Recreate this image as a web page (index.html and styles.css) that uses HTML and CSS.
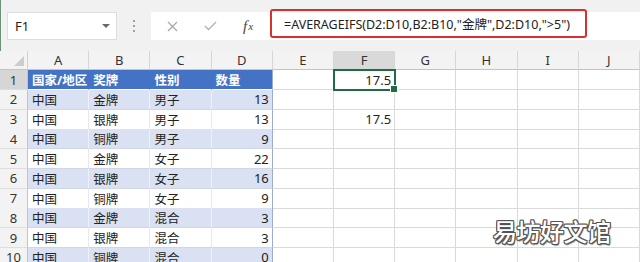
FILE: index.html
```html
<!DOCTYPE html>
<html lang="zh-CN">
<head>
  <meta charset="UTF-8">
  <title>AVERAGEIFS</title>
  <link rel="stylesheet" href="styles.css">
</head>
<body>
  <div class="toolbar">
    <div class="name-box"><span>F1</span><span class="caret"></span></div>
    <div class="grip"><i></i><i></i><i></i></div>
    <div class="formula-bar">
      <div class="fx-buttons">
        <span class="fx-btn">
          <svg width="11" height="11" viewBox="0 0 11 11"><path d="M1 1L10 10M10 1L1 10" stroke="#a9a9a9" stroke-width="1.3" fill="none"/></svg>
        </span>
        <span class="fx-btn">
          <svg width="13" height="10" viewBox="0 0 13 10"><path d="M1 5L4.5 8.5L12 1" stroke="#b3b3b3" stroke-width="1.4" fill="none"/></svg>
        </span>
        <span class="fx-btn fx-label"><i>f</i><sub>x</sub></span>
      </div>
      <div class="formula">=AVERAGEIFS(D2:D10,B2:B10,"金牌",D2:D10,"&gt;5")</div>
    </div>
  </div>

  <div class="sheet">
    <div class="row head">
      <div class="corner"><span></span></div>
      <div class="col">A</div><div class="col">B</div><div class="col">C</div><div class="col">D</div><div class="col">E</div>
      <div class="col active">F</div><div class="col">G</div><div class="col">H</div><div class="col">I</div><div class="col">J</div>
    </div>
    <div class="row">
      <div class="rh active">1</div>
      <div class="c th">国家/地区</div><div class="c th">奖牌</div><div class="c th">性别</div><div class="c th last">数量</div>
      <div class="c"></div><div class="c num selected">17.5</div><div class="c"></div><div class="c"></div><div class="c"></div><div class="c"></div>
    </div>
    <div class="row">
      <div class="rh">2</div>
      <div class="c t band">中国</div><div class="c t band">金牌</div><div class="c t band">男子</div><div class="c t band num last">13</div>
      <div class="c"></div><div class="c"></div><div class="c"></div><div class="c"></div><div class="c"></div><div class="c"></div>
    </div>
    <div class="row">
      <div class="rh">3</div>
      <div class="c t">中国</div><div class="c t">银牌</div><div class="c t">男子</div><div class="c t num last">13</div>
      <div class="c"></div><div class="c num">17.5</div><div class="c"></div><div class="c"></div><div class="c"></div><div class="c"></div>
    </div>
    <div class="row">
      <div class="rh">4</div>
      <div class="c t band">中国</div><div class="c t band">铜牌</div><div class="c t band">男子</div><div class="c t band num last">9</div>
      <div class="c"></div><div class="c"></div><div class="c"></div><div class="c"></div><div class="c"></div><div class="c"></div>
    </div>
    <div class="row">
      <div class="rh">5</div>
      <div class="c t">中国</div><div class="c t">金牌</div><div class="c t">女子</div><div class="c t num last">22</div>
      <div class="c"></div><div class="c"></div><div class="c"></div><div class="c"></div><div class="c"></div><div class="c"></div>
    </div>
    <div class="row">
      <div class="rh">6</div>
      <div class="c t band">中国</div><div class="c t band">银牌</div><div class="c t band">女子</div><div class="c t band num last">16</div>
      <div class="c"></div><div class="c"></div><div class="c"></div><div class="c"></div><div class="c"></div><div class="c"></div>
    </div>
    <div class="row">
      <div class="rh">7</div>
      <div class="c t">中国</div><div class="c t">铜牌</div><div class="c t">女子</div><div class="c t num last">9</div>
      <div class="c"></div><div class="c"></div><div class="c"></div><div class="c"></div><div class="c"></div><div class="c"></div>
    </div>
    <div class="row">
      <div class="rh">8</div>
      <div class="c t band">中国</div><div class="c t band">金牌</div><div class="c t band">混合</div><div class="c t band num last">3</div>
      <div class="c"></div><div class="c"></div><div class="c"></div><div class="c"></div><div class="c"></div><div class="c"></div>
    </div>
    <div class="row">
      <div class="rh">9</div>
      <div class="c t">中国</div><div class="c t">银牌</div><div class="c t">混合</div><div class="c t num last">3</div>
      <div class="c"></div><div class="c"></div><div class="c"></div><div class="c"></div><div class="c"></div><div class="c"></div>
    </div>
    <div class="row">
      <div class="rh">10</div>
      <div class="c t band">中国</div><div class="c t band">铜牌</div><div class="c t band">混合</div><div class="c t band num last">0</div>
      <div class="c"></div><div class="c"></div><div class="c"></div><div class="c"></div><div class="c"></div><div class="c"></div>
    </div>
  </div>

  <div class="watermark">易坊好文馆</div>
</body>
</html>
```

FILE: styles.css
```css
* {
  box-sizing: border-box;
}
body {
  margin: 0;
  width: 640px;
  height: 262px;
  overflow: hidden;
  background-color: #fff;
  font-family: "Noto Sans", "Noto Sans CJK SC", sans-serif;
  color: #222;
  position: relative;
}
.toolbar {
  height: 51px;
  background-color: #f1f1f1;
  display: flex;
  align-items: center;
  padding: 1px 0 0 7px;
  box-shadow: inset 1px 0 0 #6d9079;
}
.name-box {
  width: 110px;
  height: 28px;
  background-color: #fff;
  border: 1px solid #dddddd;
  display: flex;
  align-items: center;
  justify-content: space-between;
  padding: 0 6px 0 7px;
  font-size: 13px;
}
.caret {
  width: 0;
  height: 0;
  border-left: 4px solid transparent;
  border-right: 4px solid transparent;
  border-top: 4px solid #6a6a6a;
}
.grip {
  width: 34px;
  display: flex;
  flex-direction: column;
  align-items: center;
  gap: 3px;
}
.grip i {
  width: 2px;
  height: 2px;
  background-color: #a0a0a0;
}
.formula-bar {
  flex: 1;
  height: 28px;
  background-color: #fff;
  display: flex;
  align-items: flex-start;
}
.fx-buttons {
  width: 119px;
  height: 28px;
  display: flex;
  align-items: center;
  padding-left: 2px;
}
.fx-btn {
  width: 38px;
  display: flex;
  align-items: center;
  justify-content: center;
}
.fx-label {
  font-family: "Liberation Serif", serif;
  color: #444;
  font-size: 15px;
}
.fx-label sub {
  font-style: italic;
  font-size: 11px;
  vertical-align: -2px;
  margin-left: 1px;
}
.formula {
  width: 317px;
  height: 29px;
  margin-top: -3px;
  border: 2px solid #d7312c;
  border-radius: 3px;
  padding-left: 12px;
  font-size: 12.5px;
  display: flex;
  align-items: center;
  white-space: nowrap;
}
.row {
  display: grid;
  grid-template-columns: 28px repeat(10, 61.2px);
  height: 19.75px;
}
.row.head {
  height: 19px;
  background-color: #f3f3f3;
}
.corner {
  border-right: 1px solid #d0d0d0;
  border-bottom: 1px solid #c4c4c4;
  position: relative;
}
.corner span {
  position: absolute;
  right: 3px;
  bottom: 3px;
  width: 0;
  height: 0;
  border-left: 10px solid transparent;
  border-bottom: 10px solid #cdcdcd;
}
.col {
  border-right: 1px solid #d6d6d6;
  border-bottom: 1px solid #c4c4c4;
  font-size: 13px;
  color: #333;
  display: flex;
  align-items: center;
  justify-content: center;
}
.col.active {
  background-color: #d9d9d9;
}
.rh {
  background-color: #f3f3f3;
  border-right: 1px solid #c4c4c4;
  border-bottom: 1px solid #dedede;
  font-size: 13px;
  color: #333;
  display: flex;
  align-items: center;
  justify-content: center;
}
.rh.active {
  background-color: #d6d6d6;
}
.c {
  border-right: 1px solid #dadada;
  border-bottom: 1px solid #dadada;
  font-size: 12.5px;
  display: flex;
  align-items: center;
  padding: 0 3px 0 4px;
  white-space: nowrap;
}
.c.th {
  background-color: #4472c4;
  color: #fff;
  font-weight: bold;
  border-right-color: #4472c4;
  border-bottom-color: #fff;
}
.c.t {
  border-right-color: #e6e9ef;
  border-bottom-color: #cfd7e6;
}
.c.band {
  background-color: #d9e1f2;
  border-right-color: #eef1f7;
}
.c.last {
  border-right-color: #9aaed3;
}
.c.num {
  justify-content: flex-end;
  font-size: 13px;
}
.c.selected {
  position: relative;
  outline: 2px solid #1f6b43;
  outline-offset: -1px;
}
.c.selected::after {
  content: "";
  position: absolute;
  right: -4px;
  bottom: -4px;
  width: 6px;
  height: 6px;
  background-color: #1f6b43;
  border: 1px solid #fff;
}
.watermark {
  position: absolute;
  left: 493px;
  top: 213px;
  font-size: 24px;
  font-weight: 500;
  color: #fff;
  letter-spacing: -0.5px;
  text-shadow: -1px -1px 0 #555, 1px -1px 0 #555, -1px 1px 0 #555, 1px 1px 0 #555, 0 -1px 0 #555, 0 1px 0 #555, -1px 0 0 #555, 1px 0 0 #555, 1px 2px 1px #999;
}
```
